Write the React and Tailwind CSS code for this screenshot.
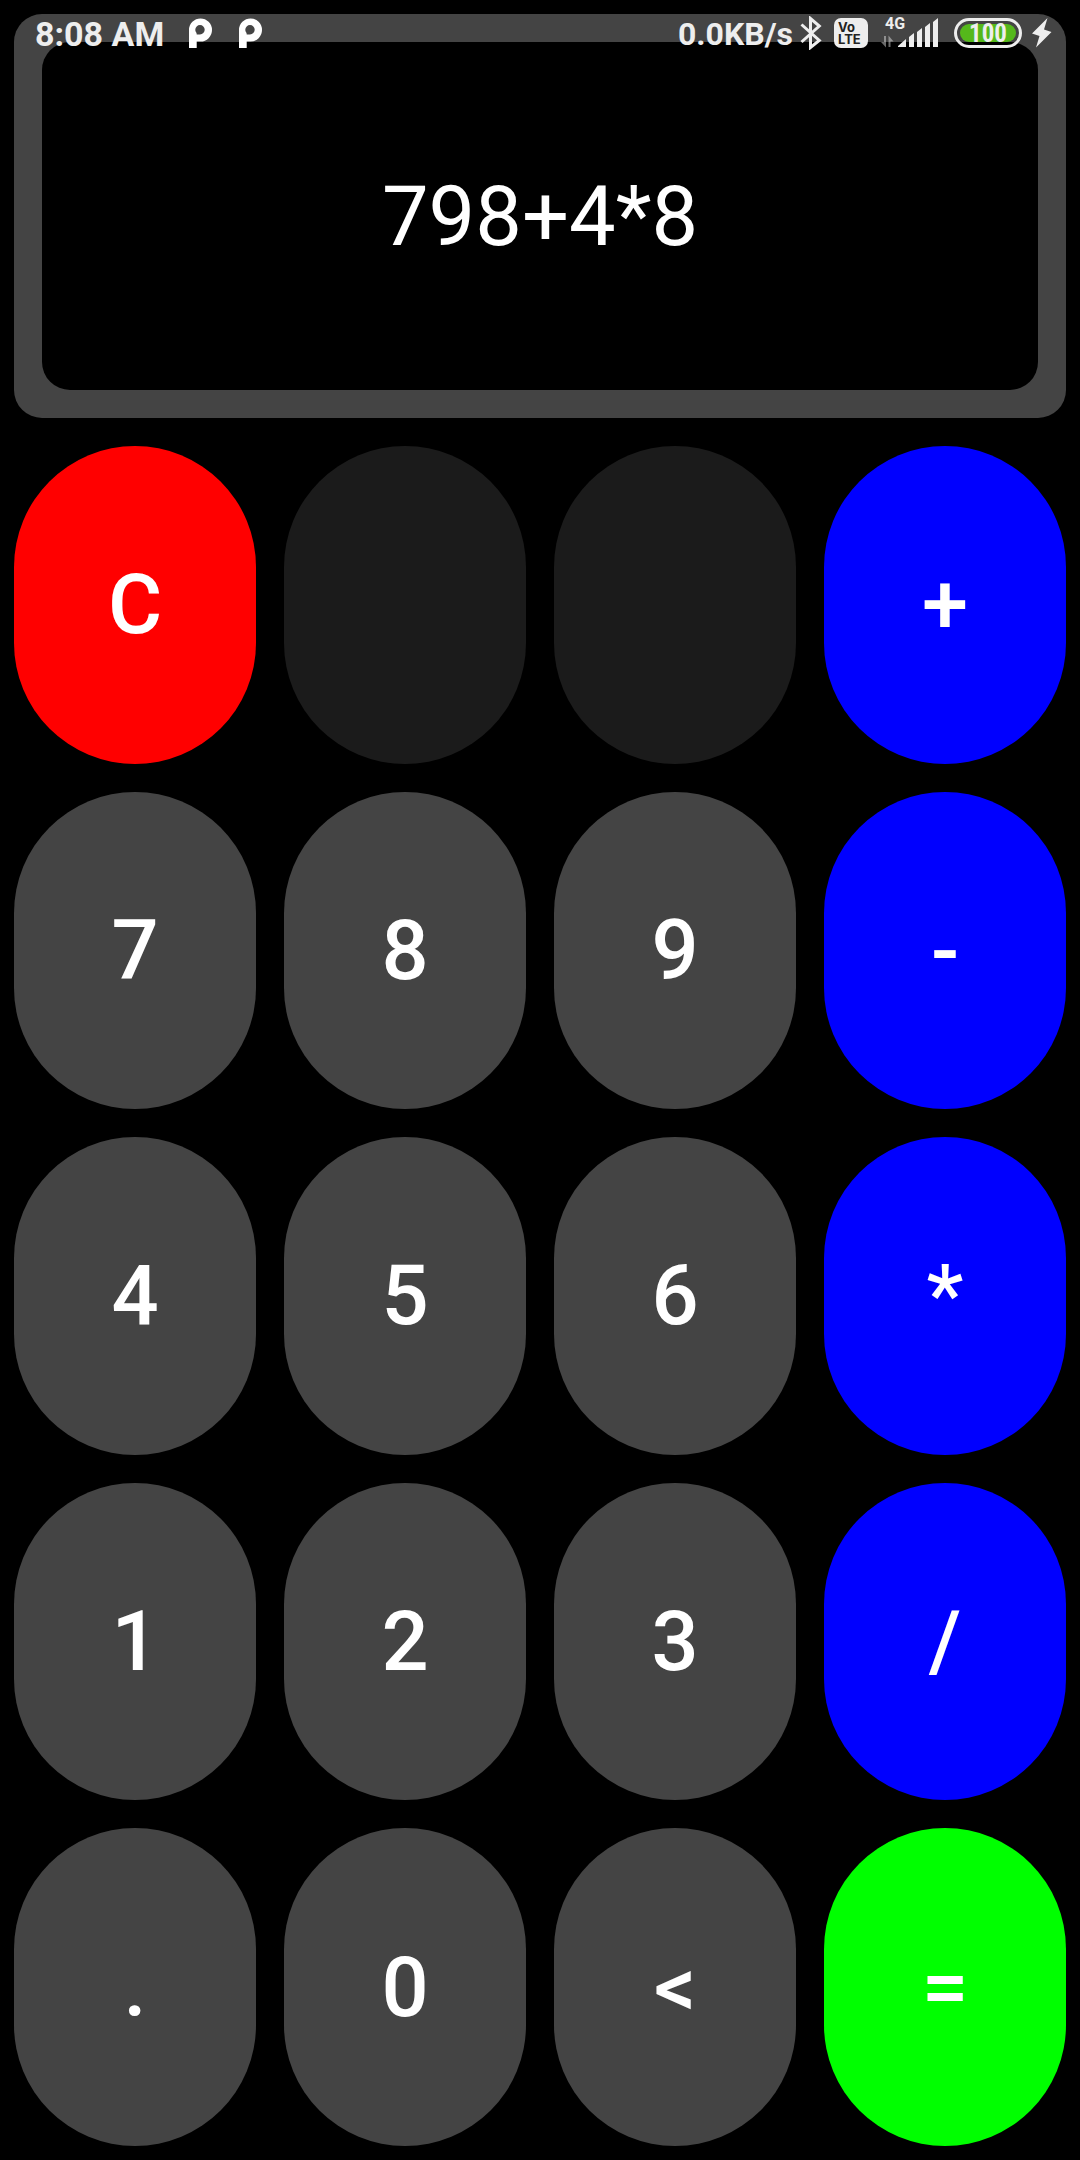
import { useState } from "react";

const KEYS = [
  { label: "C", tone: "clear" },
  { label: "", tone: "blank", name: "Unused key 1" },
  { label: "", tone: "blank", name: "Unused key 2" },
  { label: "+", tone: "operator" },
  { label: "7" },
  { label: "8" },
  { label: "9" },
  { label: "-", tone: "operator" },
  { label: "4" },
  { label: "5" },
  { label: "6" },
  { label: "*", tone: "operator" },
  { label: "1" },
  { label: "2" },
  { label: "3" },
  { label: "/", tone: "operator" },
  { label: "." },
  { label: "0" },
  { label: "<" },
  { label: "=", tone: "equals" },
];

const TONES = {
  digit: "bg-[#444444]",
  clear: "bg-[#ff0000]",
  blank: "bg-[#1b1b1b]",
  operator: "bg-[#0000ff]",
  equals: "bg-[#00ff00]",
};

function calculate(expression) {
  const tokens = expression.match(/\d*\.?\d+|[-+*/]/g) || [];
  if (tokens.length === 0) return "";
  const terms = [];
  let sign = "+";
  for (const token of tokens) {
    if (/^[-+*/]$/.test(token)) {
      sign = token;
      continue;
    }
    const value = Number(token);
    if (sign === "+") terms.push(value);
    else if (sign === "-") terms.push(-value);
    else if (sign === "*") terms.push(terms.pop() * value);
    else terms.push(terms.pop() / value);
  }
  return String(terms.reduce((sum, n) => sum + n, 0));
}

function NotificationIcon() {
  return (
    <svg viewBox="0 0 24 30" className="h-[30px] w-6 text-white" aria-hidden="true">
      <path
        fill="currentColor"
        fillRule="evenodd"
        d="M1 30V12A11.500 11.500 0 1 1 12.500 23.500H8.700V30ZM8.700 16.500H12a4.700 4.700 0 1 0-4.700-4.700c0 .9.200 1.600.600 2.300.500.700.800 1.300.800 2.400Z"
      />
    </svg>
  );
}

function BluetoothIcon() {
  return (
    <svg viewBox="0 0 22 34" className="h-[34px] w-[22px]" fill="none" stroke="currentColor" strokeWidth="3" aria-hidden="true">
      <path d="M1.500 8.500 19.300 24.500 10.500 31.500V2.500l8.800 7.500L1.500 26" />
    </svg>
  );
}

function SignalIcon() {
  return (
    <svg viewBox="0 0 58 30" className="h-[30px] w-[58px]" fill="currentColor" aria-hidden="true">
      <path opacity=".45" d="M3 18h2v11.500L0 24h3ZM7.500 29V17.500l5 6h-3V29Z" />
      <path d="M17 29v-1l8-7v8ZM28 29V19l5-4v14ZM36 29V14l5-4v19ZM44 29V9l5-4v24ZM52 29V4l5-4v29Z" />
    </svg>
  );
}

function ChargingIcon() {
  return (
    <svg viewBox="0 0 20 30" className="h-[30px] w-5" fill="currentColor" aria-hidden="true">
      <path d="M15.500 0 0 15.500 7.500 18 4 29.500 19.500 14 12 11.500Z" />
    </svg>
  );
}

function StatusBar() {
  return (
    <header className="absolute inset-x-0 top-0 flex h-[66px] items-center justify-between pr-[28px] pl-[35px] text-[#eeeeee]">
      <div className="flex items-center">
        <time className="pt-0.5 text-[34px] leading-none font-bold">8:08 AM</time>
        <div className="ml-6 flex gap-[26px]">
          <NotificationIcon />
          <NotificationIcon />
        </div>
      </div>
      <div className="flex items-center">
        <span className="pt-0.5 text-[32px] leading-none font-bold">0.0KB/s</span>
        <span className="ml-[7px]">
          <BluetoothIcon />
        </span>
        <span className="ml-3 flex h-[30px] w-[34px] flex-col justify-center rounded-[7px] bg-[#eeeeee] pl-1 font-[Inter,sans-serif] text-[13px] leading-[12px] font-bold text-[#222222]">
          <span>Vo</span>
          <span>LTE</span>
        </span>
        <span className="relative ml-[13px]">
          <SignalIcon />
          <span className="absolute -top-0.5 left-1 text-[16px] leading-none font-bold">4G</span>
        </span>
        <span className="ml-[15px] flex h-[30px] w-[68px] rounded-full border-[3px] border-[#eeeeee] p-[3px]">
          <span className="flex flex-1 items-center justify-center rounded-full bg-[#55b81b] font-['Roboto_Condensed','Liberation_Sans_Narrow',Roboto,sans-serif] text-[25px] leading-none font-bold">
            100
          </span>
        </span>
        <span className="ml-[10px]">
          <ChargingIcon />
        </span>
      </div>
    </header>
  );
}

export default function App() {
  const [expression, setExpression] = useState("798+4*8");

  const press = (label) => {
    if (label === "") return;
    if (label === "C") setExpression("");
    else if (label === "<") setExpression(expression.slice(0, -1));
    else if (label === "=") setExpression(calculate(expression));
    else setExpression(expression + label);
  };

  return (
    <div className="relative flex min-h-screen flex-col gap-7 bg-black p-3.5 font-[Roboto,sans-serif] text-white">
      <StatusBar />
      <div className="flex min-h-[404px] rounded-[28px] bg-[#444444] p-7">
        <output className="flex flex-1 items-center justify-center rounded-[28px] bg-black text-[83px] leading-none">
          {expression}
        </output>
      </div>
      <main className="grid flex-1 auto-rows-fr grid-cols-4 gap-7">
        {KEYS.map(({ label, tone = "digit", name }, index) => (
          <button
            key={index}
            type="button"
            aria-label={name}
            disabled={tone === "blank"}
            onClick={() => press(label)}
            className={`flex items-center justify-center rounded-full text-[83px] leading-none font-medium ${TONES[tone]}`}
          >
            {label}
          </button>
        ))}
      </main>
    </div>
  );
}
